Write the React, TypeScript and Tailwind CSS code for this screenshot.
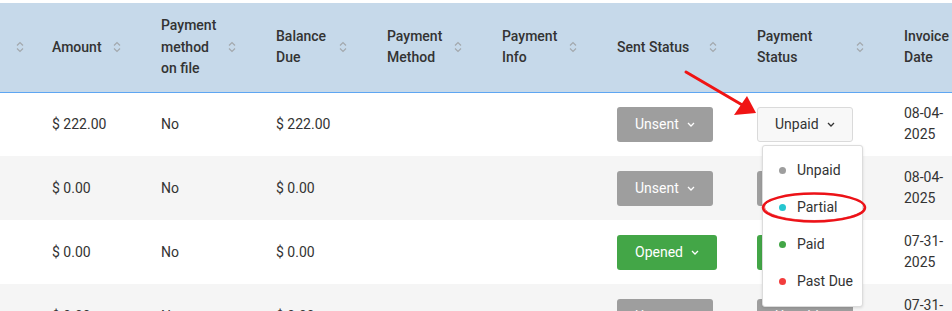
import React from "react";

type Row = {
  amount: string;
  onFile: string;
  balance: string;
  sent: "Unsent" | "Opened";
  pay: "gray" | "green" | "open";
  date: [string, string];
  bg: string;
};

const cols = [36, 109, 115, 111, 115, 115, 140, 147, 120];

const headers: string[][] = [
  [],
  ["Amount"],
  ["Payment", "method", "on file"],
  ["Balance", "Due"],
  ["Payment", "Method"],
  ["Payment", "Info"],
  ["Sent Status"],
  ["Payment", "Status"],
  ["Invoice", "Date"],
];

const rows: Row[] = [
  { amount: "$ 222.00", onFile: "No", balance: "$ 222.00", sent: "Unsent", pay: "open", date: ["08-04-", "2025"], bg: "bg-white" },
  { amount: "$ 0.00", onFile: "No", balance: "$ 0.00", sent: "Unsent", pay: "gray", date: ["08-04-", "2025"], bg: "bg-[#f5f5f5]" },
  { amount: "$ 0.00", onFile: "No", balance: "$ 0.00", sent: "Opened", pay: "green", date: ["07-31-", "2025"], bg: "bg-white" },
  { amount: "$ 0.00", onFile: "No", balance: "$ 0.00", sent: "Unsent", pay: "gray", date: ["07-31-", "2025"], bg: "bg-[#f5f5f5]" },
];

function SortIcon() {
  return (
    <svg width="8" height="12" viewBox="0 0 8 12" className="shrink-0">
      <path d="M1 4.5 L4 1.5 L7 4.5" fill="none" stroke="#a3a8ad" strokeWidth="1.2" />
      <path d="M1 7.5 L4 10.5 L7 7.5" fill="none" stroke="#a3a8ad" strokeWidth="1.2" />
    </svg>
  );
}

function Chevron({ color }: { color: string }) {
  return (
    <svg width="8" height="5" viewBox="0 0 8 5" className="shrink-0">
      <path d="M1 1 L4 4 L7 1" fill="none" stroke={color} strokeWidth="1.3" />
    </svg>
  );
}

function SentButton({ label }: { label: "Unsent" | "Opened" }) {
  const color = label === "Opened" ? "bg-[#43a647]" : "bg-[#9e9e9e]";
  return (
    <div className={`${color} inline-flex h-[35px] items-center gap-2 rounded-[3px] px-[18px] text-white`}>
      <span>{label}</span>
      <Chevron color="#ffffff" />
    </div>
  );
}

function PayButton({ kind }: { kind: Row["pay"] }) {
  if (kind === "open") {
    return (
      <div className="inline-flex h-[35px] items-center gap-2 rounded-[3px] border border-[#dadada] bg-[#f8f8f8] px-[17px] text-[#333]">
        <span>Unpaid</span>
        <Chevron color="#333333" />
      </div>
    );
  }
  const color = kind === "green" ? "bg-[#43a647]" : "bg-[#9e9e9e]";
  return (
    <div className={`${color} inline-flex h-[35px] items-center gap-2 rounded-[3px] px-[18px] text-white`}>
      <span>Unpaid</span>
      <Chevron color="#ffffff" />
    </div>
  );
}

const options = [
  { label: "Unpaid", dot: "bg-[#9e9e9e]" },
  { label: "Partial", dot: "bg-[#26c6d0]" },
  { label: "Paid", dot: "bg-[#43a647]" },
  { label: "Past Due", dot: "bg-[#f23c3c]" },
];

export default function App() {
  return (
    <div
      className="relative h-[311px] w-[952px] overflow-hidden bg-white pt-[3px] text-[14px] text-[#333]"
      style={{ fontFamily: "Roboto, 'Liberation Sans', sans-serif" }}
    >
      <table className="table-fixed border-collapse" style={{ width: cols.reduce((a, b) => a + b, 0) }}>
        <colgroup>
          {cols.map((w, i) => (
            <col key={i} style={{ width: w }} />
          ))}
        </colgroup>
        <thead>
          <tr className="h-[89px] border-b border-[#5ea6f2] bg-[#c6d9ea]">
            {headers.map((lines, i) => (
              <th key={i} className="p-0 text-left align-middle font-medium leading-[21.5px]">
                <div className="flex items-center justify-between pl-4 pr-6">
                  <div>
                    {lines.map((l) => (
                      <div key={l}>{l}</div>
                    ))}
                  </div>
                  {i < 8 && <SortIcon />}
                </div>
              </th>
            ))}
          </tr>
        </thead>
        <tbody>
          {rows.map((r, i) => (
            <tr key={i} className={`${r.bg} h-[64px]`}>
              <td />
              <td className="pl-4">{r.amount}</td>
              <td className="pl-4">{r.onFile}</td>
              <td className="pl-4">{r.balance}</td>
              <td />
              <td />
              <td className="pl-4">
                <SentButton label={r.sent} />
              </td>
              <td className="pl-4">
                <PayButton kind={r.pay} />
              </td>
              <td className="pl-4 leading-[21px]">
                <div>{r.date[0]}</div>
                <div>{r.date[1]}</div>
              </td>
            </tr>
          ))}
        </tbody>
      </table>

      <div className="absolute left-[762px] top-[145px] w-[101px] rounded-[3px] border border-[#dcdcdc] bg-white py-[6px] shadow-[0_1px_3px_rgba(0,0,0,0.12)]">
        {options.map((o) => (
          <div key={o.label} className="flex h-[37px] items-center pl-4">
            <span className={`${o.dot} mr-[11px] h-[7px] w-[7px] rounded-full`} />
            <span>{o.label}</span>
          </div>
        ))}
      </div>

      <svg className="pointer-events-none absolute left-0 top-0" width="952" height="311">
        <path d="M686 72 L744 106" stroke="#f01414" strokeWidth="3" strokeLinecap="round" />
        <polygon points="747,96 734,115 756,113" fill="#f01414" />
        <ellipse cx="814" cy="207.5" rx="51" ry="14" fill="none" stroke="#ec1218" strokeWidth="2.5" />
        <ellipse cx="814.5" cy="207" rx="50" ry="13.5" fill="none" stroke="#ec1218" strokeWidth="1" opacity="0.6" />
      </svg>
    </div>
  );
}
